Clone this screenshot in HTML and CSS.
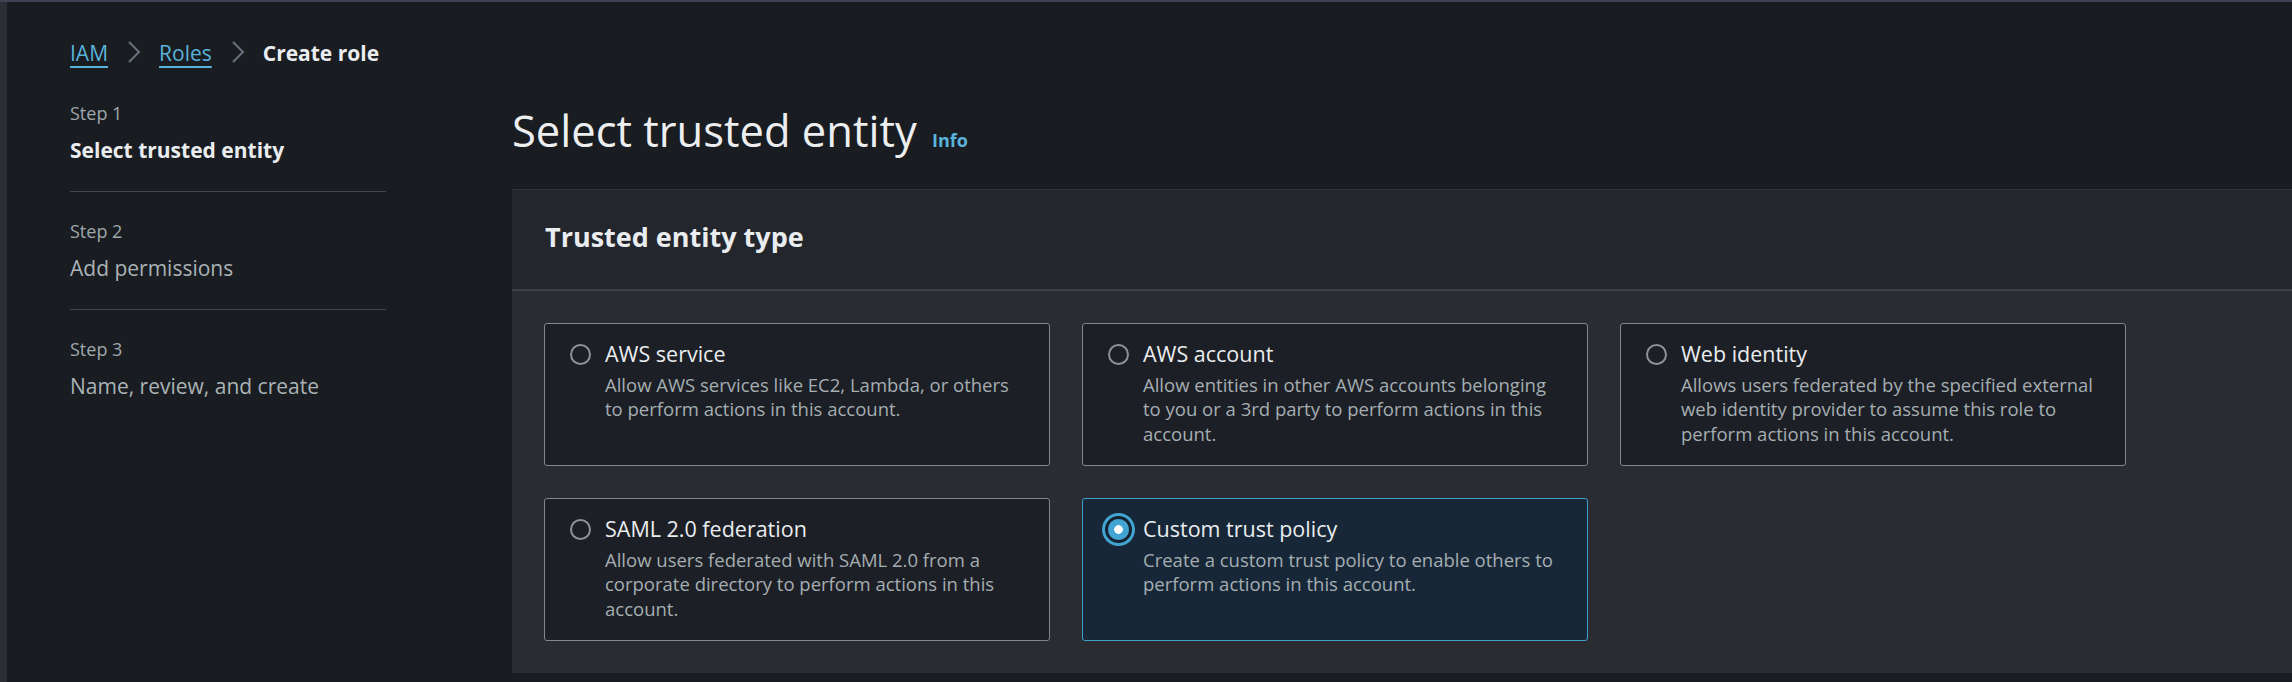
FILE: index.html
```html
<!DOCTYPE html>
<html lang="en">
<head>
<meta charset="utf-8">
<title>Create role</title>
<link rel="stylesheet" href="styles.css">
</head>
<body>
<div class="app">
  <div class="rail"></div>
  <div class="content">
    <nav class="breadcrumbs">
      <a class="crumb-link" href="#">IAM</a>
      <svg class="chevron" width="14" height="24" viewBox="0 0 14 24" aria-hidden="true"><polyline points="2,2 12,12 2,22" fill="none" stroke="currentColor" stroke-width="2"/></svg>
      <a class="crumb-link" href="#">Roles</a>
      <svg class="chevron" width="14" height="24" viewBox="0 0 14 24" aria-hidden="true"><polyline points="2,2 12,12 2,22" fill="none" stroke="currentColor" stroke-width="2"/></svg>
      <span class="crumb-current">Create role</span>
    </nav>
    <div class="layout">
      <ol class="steps">
        <li class="step active">
          <span class="step-label">Step 1</span>
          <span class="step-title">Select trusted entity</span>
        </li>
        <li class="step">
          <span class="step-label">Step 2</span>
          <span class="step-title">Add permissions</span>
        </li>
        <li class="step">
          <span class="step-label">Step 3</span>
          <span class="step-title">Name, review, and create</span>
        </li>
      </ol>
      <main class="main">
        <h1 class="page-title">Select trusted entity <a class="info" href="#">Info</a></h1>
        <section class="panel">
          <header class="panel-header">
            <h2 class="panel-title">Trusted entity type</h2>
          </header>
          <div class="panel-body">
            <div class="tiles">
              <div class="tile">
                <span class="radio"></span>
                <div class="tile-text">
                  <div class="tile-title">AWS service</div>
                  <div class="tile-desc">Allow AWS services like EC2, Lambda, or others to perform actions in this account.</div>
                </div>
              </div>
              <div class="tile">
                <span class="radio"></span>
                <div class="tile-text">
                  <div class="tile-title">AWS account</div>
                  <div class="tile-desc">Allow entities in other AWS accounts belonging to you or a 3rd party to perform actions in this account.</div>
                </div>
              </div>
              <div class="tile">
                <span class="radio"></span>
                <div class="tile-text">
                  <div class="tile-title">Web identity</div>
                  <div class="tile-desc">Allows users federated by the specified external web identity provider to assume this role to perform actions in this account.</div>
                </div>
              </div>
              <div class="tile">
                <span class="radio"></span>
                <div class="tile-text">
                  <div class="tile-title">SAML 2.0 federation</div>
                  <div class="tile-desc">Allow users federated with SAML 2.0 from a corporate directory to perform actions in this account.</div>
                </div>
              </div>
              <div class="tile selected">
                <span class="radio checked"></span>
                <div class="tile-text">
                  <div class="tile-title">Custom trust policy</div>
                  <div class="tile-desc">Create a custom trust policy to enable others to perform actions in this account.</div>
                </div>
              </div>
            </div>
          </div>
        </section>
      </main>
    </div>
  </div>
</div>
</body>
</html>
```

FILE: styles.css
```css
html, body {
  margin: 0;
  padding: 0;
}

body {
  background: #191c21;
  font-family: "Open Sans", "Noto Sans", sans-serif;
  overflow: hidden;
}

.app {
  display: flex;
  min-height: 100vh;
  box-sizing: border-box;
  border-top: 2px solid #3d4352;
}

.rail {
  flex: none;
  width: 7px;
  background: #2b2e34;
}

.content {
  flex: 1;
  min-width: 0;
  padding: 36px 0 0 63px;
}

/* Breadcrumbs */
.breadcrumbs {
  display: flex;
  align-items: center;
  height: 30px;
  font-size: 21px;
  line-height: 30px;
}

.crumb-link {
  color: #5ab3d9;
  text-decoration: underline;
  text-decoration-thickness: 2px;
  text-underline-offset: 5px;
}

.chevron {
  flex: none;
  color: #69717c;
  margin: -3px 18px 0 19px;
}

.crumb-current {
  color: #eaedef;
  font-weight: 700;
}

/* Layout */
.layout {
  display: grid;
  grid-template-columns: 316px 1fr;
  column-gap: 126px;
  margin-top: 33px;
}

/* Steps */
.steps {
  list-style: none;
  margin: 0;
  padding: 0;
}

.step {
  padding: 27px 0 26px;
  border-bottom: 1px solid #414750;
}

.step:first-child {
  padding-top: 0;
}

.step:last-child {
  border-bottom: none;
}

.step-label {
  display: block;
  font-size: 18px;
  line-height: 24px;
  color: #9ea7ab;
}

.step-title {
  display: block;
  margin-top: 10px;
  font-size: 21px;
  line-height: 30px;
  color: #a9b3b6;
}

.step.active .step-title {
  color: #eaedef;
  font-weight: 700;
}

/* Main */
.main {
  min-width: 0;
}

.page-title {
  margin: 0;
  padding-top: 3px;
  height: 51px;
  font-size: 43.5px;
  line-height: 54px;
  font-weight: 400;
  color: #eceef0;
}

.info {
  margin-left: 4px;
  font-size: 18px;
  line-height: 1;
  font-weight: 700;
  color: #5ab3d9;
  text-decoration: none;
}

.panel {
  margin-top: 34px;
  background: #2a2c31;
  border-top: 1px solid #30333a;
}

.panel-header {
  background: #23262c;
  padding: 29px 33px 34px;
  border-bottom: 2px solid #3c4048;
}

.panel-title {
  margin: 0;
  font-size: 27px;
  line-height: 36px;
  font-weight: 700;
  color: #eaedef;
}

.panel-body {
  padding: 32px 32px 32px;
}

.tiles {
  display: grid;
  grid-template-columns: repeat(3, 506px);
  gap: 32px;
}

.tile {
  display: flex;
  align-items: flex-start;
  gap: 14px;
  padding: 15px 30px 19px 25px;
  background: #1c1f25;
  border: 1px solid #80878f;
  border-radius: 3px;
}

.radio {
  flex: none;
  box-sizing: border-box;
  width: 21px;
  height: 21px;
  margin-top: 4.5px;
  border: 2px solid #8b9298;
  border-radius: 50%;
}

.tile-text {
  min-width: 0;
}

.tile-title {
  font-size: 21.5px;
  line-height: 30px;
  color: #eaedef;
}

.tile-desc {
  margin-top: 3.5px;
  font-size: 18.5px;
  line-height: 24.5px;
  color: #a5aeb2;
}

.tile.selected {
  background: #172737;
  border-color: #3f9fcc;
}

.radio.checked {
  border: none;
  background: radial-gradient(circle, #ffffff 0 4px, #42a4d1 4.6px);
  box-shadow: 0 0 0 3px #142230, 0 0 0 6px #42a4d1;
}
```
